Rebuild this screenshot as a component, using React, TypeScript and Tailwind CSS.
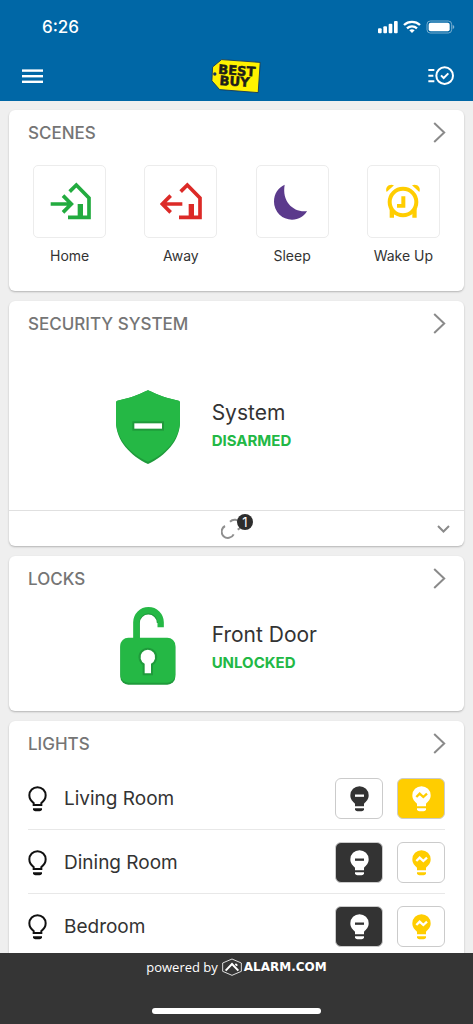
import { useState, type ReactNode } from "react";

interface CardProps {
  title: string;
  children: ReactNode;
}

interface StatusProps {
  name: string;
  state: string;
  icon: ReactNode;
}

interface Light {
  name: string;
  on: boolean;
}

const initialLights: Light[] = [
  { name: "Living Room", on: true },
  { name: "Dining Room", on: false },
  { name: "Bedroom", on: false },
];

const scenes = [
  { name: "Home", icon: <HomeIcon /> },
  { name: "Away", icon: <AwayIcon /> },
  { name: "Sleep", icon: <MoonIcon /> },
  { name: "Wake Up", icon: <AlarmIcon /> },
];

export default function App() {
  const [lights, setLights] = useState(initialLights);

  const setLight = (name: string, on: boolean) =>
    setLights((prev) => prev.map((l) => (l.name === name ? { ...l, on } : l)));

  return (
    <div className="flex h-dvh flex-col overflow-hidden bg-[#efefef] font-['Inter',sans-serif] text-[#333]">
      <Header />

      <main className="flex min-h-0 flex-1 flex-col gap-[10px] overflow-hidden px-[9px] pt-[9px]">
        <Card title="SCENES">
          <div className="grid grid-cols-4 px-[5px] pt-[10px] pb-[25px]">
            {scenes.map((scene) => (
              <button key={scene.name} type="button" className="flex flex-col items-center gap-2">
                <span className="flex size-[73px] items-center justify-center rounded-[5px] border border-[#ececec]">
                  {scene.icon}
                </span>
                <span className="text-sm leading-5">{scene.name}</span>
              </button>
            ))}
          </div>
        </Card>

        <Card title="SECURITY SYSTEM">
          <div className="flex h-[164px] items-start pt-11">
            <Status name="System" state="DISARMED" icon={<ShieldIcon />} />
          </div>
          <button
            type="button"
            aria-label="Show sensors"
            className="grid h-9 w-full grid-cols-[1fr_auto_1fr] items-center border-t border-[#e0e0e0] pr-[14px] pl-[5px]"
          >
            <span />
            <span className="relative size-[22px]">
              <SensorIcon />
              <span className="absolute -top-1 left-4 flex size-4 items-center justify-center rounded-full bg-[#2d2d2d] text-[13px] leading-4 text-white">
                1
              </span>
            </span>
            <svg className="justify-self-end" width="13" height="8" viewBox="0 0 13 8" fill="none">
              <path d="M1 1l5.5 5.5L12 1" stroke="#8a8a8a" strokeWidth="2" />
            </svg>
          </button>
        </Card>

        <Card title="LOCKS">
          <div className="flex h-[110px] items-start pt-[5px]">
            <Status name="Front Door" state="UNLOCKED" icon={<LockIcon />} />
          </div>
        </Card>

        <Card title="LIGHTS">
          <ul className="px-[19px]">
            {lights.map((light) => (
              <li key={light.name} className="flex h-16 items-center border-b border-[#e8e8e8] pt-[2px]">
                <BulbOutline />
                <span className="ml-[17px] flex-1 text-[19px] leading-6">{light.name}</span>
                <div className="flex gap-[14px]">
                  <button
                    type="button"
                    aria-label={`Turn ${light.name} off`}
                    aria-pressed={!light.on}
                    onClick={() => setLight(light.name, false)}
                    className={`flex h-[41px] w-12 items-center justify-center rounded-md border border-[#cbcbcb] ${
                      light.on ? "bg-white text-[#333]" : "bg-[#333] text-white"
                    }`}
                  >
                    <BulbSolid mark="M105 226h27" markColor={light.on ? "#fff" : "#333"} />
                  </button>
                  <button
                    type="button"
                    aria-label={`Turn ${light.name} on`}
                    aria-pressed={light.on}
                    onClick={() => setLight(light.name, true)}
                    className={`flex h-[41px] w-12 items-center justify-center rounded-md border border-[#cbcbcb] ${
                      light.on ? "bg-[#ffcd00] text-white" : "bg-white text-[#ffcd00]"
                    }`}
                  >
                    <BulbSolid mark="M103 230l10-10 11 10 11-10" markColor={light.on ? "#ffcd00" : "#fff"} />
                  </button>
                </div>
              </li>
            ))}
          </ul>
        </Card>
      </main>

      <Footer />
    </div>
  );
}

function Header() {
  return (
    <header className="shrink-0 bg-[#0067a6] text-white">
      <div className="flex h-[51px] items-center justify-between pt-[2px] pr-[18px] pl-[42px]">
        <span className="text-[17px] leading-6 font-medium">6:26</span>
        <svg width="77" height="14" viewBox="534 59 231 42" fill="currentColor" aria-label="Signal, wifi and battery">
          <rect x="534" y="84" width="11" height="15" rx="3" />
          <rect x="550" y="78" width="11" height="21" rx="3" />
          <rect x="566" y="70" width="11" height="29" rx="3" />
          <rect x="582" y="62" width="11" height="37" rx="3" />
          <g fill="none" stroke="currentColor" strokeWidth="7">
            <path d="M612 74a35 35 0 0 1 48 0" />
            <path d="M621 84a22 22 0 0 1 30 0" />
          </g>
          <path d="M628 90a12 12 0 0 1 16 0l-8 8z" />
          <rect x="681" y="62" width="74" height="36" rx="10" fill="none" stroke="currentColor" strokeWidth="3" opacity=".45" />
          <rect x="686" y="67" width="63" height="26" rx="6" />
          <path d="M758 74q5 2 5 6t-5 6z" opacity=".5" />
        </svg>
      </div>
      <div className="grid h-[50px] grid-cols-[1fr_auto_1fr] items-center pr-[19px] pl-[22px]">
        <button type="button" aria-label="Menu" className="justify-self-start">
          <svg width="21" height="15" viewBox="0 0 21 15" fill="currentColor">
            <rect y="0.4" width="21" height="2.4" />
            <rect y="6" width="21" height="2.4" />
            <rect y="11.6" width="21" height="2.4" />
          </svg>
        </button>
        <BrandLogo />
        <button type="button" aria-label="Activity" className="justify-self-end">
          <svg width="26" height="20" viewBox="683 198 78 60" fill="none" stroke="currentColor">
            <circle cx="733" cy="227" r="25" strokeWidth="6" />
            <path d="M684 210h18M684 227h15M684 244h18" strokeWidth="6" />
            <path d="M722 226l8 8 14-14" strokeWidth="6" />
          </svg>
        </button>
      </div>
    </header>
  );
}

function BrandLogo() {
  return (
    <svg width="54" height="36" viewBox="0 0 54 36" role="img" aria-label="Best Buy">
      <path
        d="M10.6 1.6L49.2 4.4 47.2 34.6 8.6 31.6.9 22.8 1.6 9z"
        fill="#fff200"
        stroke="#15375c"
        strokeWidth="0.9"
        strokeLinejoin="round"
      />
      <circle cx="3.8" cy="16" r="1.7" fill="#15375c" />
      <g
        transform="rotate(4 24 18)"
        className="font-['DejaVu_Sans',sans-serif] text-[13px] font-bold"
        fill="#1d1d1b"
        stroke="#1d1d1b"
        strokeWidth="0.5"
      >
        <text x="7" y="17">BEST</text>
        <text x="9" y="28">BUY</text>
      </g>
    </svg>
  );
}

function Card({ title, children }: CardProps) {
  return (
    <section className="shrink-0 rounded-md bg-white shadow-[0_1px_2px_rgba(0,0,0,0.25)]">
      <a href="#" className="flex h-[45px] items-center justify-between pr-[18px] pl-[19px]">
        <h2 className="text-[17px] leading-6 font-medium text-[#757575]">{title}</h2>
        <svg width="13" height="21" viewBox="0 0 13 21" fill="none">
          <path d="M1.2 1l10 9.5-10 9.5" stroke="#8a8a8a" strokeWidth="2" />
        </svg>
      </a>
      {children}
    </section>
  );
}

function Status({ name, state, icon }: StatusProps) {
  return (
    <div className="grid w-full grid-cols-[9fr_15fr] items-start">
      <div className="flex justify-end">
        <div className="flex w-16 justify-center">{icon}</div>
      </div>
      <div className="self-end pb-[9px] pl-8">
        <p className="text-[21px] leading-7">{name}</p>
        <p className="text-[15px] leading-7 font-bold text-[#22b845]">{state}</p>
      </div>
    </div>
  );
}

function Footer() {
  return (
    <footer className="flex h-[71px] shrink-0 flex-col items-center justify-between bg-[#353535] pt-1 pb-[10px] text-white">
      <div className="flex h-5 items-center">
        <span className="font-['Open_Sans',sans-serif] text-[13px] leading-5">powered by</span>
        <svg className="ml-1" width="20" height="18" viewBox="273 54 60 54" fill="none" stroke="currentColor">
          <path d="M303 57l28 12v25l-28 12-28-12V69z" strokeWidth="2.5" />
          <path d="M284 92l19-20 19 20" strokeWidth="6" />
          <path d="M313 72l6 5" strokeWidth="5" />
        </svg>
        <span className="ml-[2px] font-['DejaVu_Sans',sans-serif] text-[12px] leading-5 font-bold">ALARM.COM</span>
      </div>
      <div className="h-[6px] w-[169px] rounded-full bg-white" />
    </footer>
  );
}

function House() {
  return (
    <>
      <path d="M210 243l20-20 38 39v58h-63" />
      <path d="M242 280v40" strokeWidth="16" />
    </>
  );
}

function HomeIcon() {
  return (
    <svg width="42" height="40" viewBox="148 214 126 120" fill="none" stroke="#22ab3f" strokeWidth="11">
      <House />
      <path d="M153 280h60M190 255l25 25-25 25" />
    </svg>
  );
}

function AwayIcon() {
  return (
    <svg width="42" height="40" viewBox="148 214 126 120" fill="none" stroke="#dc2a27" strokeWidth="11">
      <House />
      <path d="M215 280h-60M180 255l-25 25 25 25" />
    </svg>
  );
}

function MoonIcon() {
  return (
    <svg width="42" height="40" viewBox="108 214 126 120">
      <path d="M149 222C130 230 117 249 117 273a54 54 0 0 0 54 54c20 0 37-10 45-26C176 306 140 274 149 222z" fill="#5b3a8c" />
    </svg>
  );
}

function AlarmIcon() {
  return (
    <svg width="42" height="40" viewBox="441 214 126 120" fill="#ffcd00">
      <circle cx="504" cy="274" r="40" fill="none" stroke="#ffcd00" strokeWidth="12" />
      <path d="M499 257h12v34h-25v-11h13zM464 293l13 10v18h-13zM545 293l-13 10v18h13z" />
      <path d="M455 244c-6-14 7-26 22-20zM553 244c6-14-7-26-22-20z" />
    </svg>
  );
}

function ShieldIcon() {
  return (
    <svg width="64" height="74" viewBox="78 58 192 222">
      <path
        d="M174 59c28 13 60 26 92 31q4 2 4 6v58c0 56-44 102-96 126-52-24-96-70-96-126V96q0-4 4-6c32-5 64-18 92-31z"
        fill="#1f9a3b"
      />
      <path
        d="M174 59c28 13 60 26 92 31q4 2 4 6v54c0 54-44 100-96 123-52-23-96-69-96-123V96q0-4 4-6c32-5 64-18 92-31z"
        fill="#25b845"
      />
      <rect x="127" y="152" width="95" height="28" fill="#1f9a3b" />
      <rect x="133" y="158" width="83" height="16" fill="#fff" />
    </svg>
  );
}

function LockIcon() {
  return (
    <svg width="56" height="80" viewBox="91 48 168 240">
      <path d="M143 145V99a33 33 0 0 1 66 0" fill="none" stroke="#1f9a3b" strokeWidth="15" />
      <path d="M140 147V97a36 36 0 0 1 73 0v15" fill="none" stroke="#25b845" strokeWidth="19" />
      <rect x="92" y="147" width="165" height="137" rx="24" fill="#1f9a3b" />
      <rect x="92" y="143" width="165" height="135" rx="24" fill="#25b845" />
      <path
        d="M165 250v-29a22 22 0 1 1 19 0v29z"
        fill="#fff"
        stroke="#1f9a3b"
        strokeWidth="12"
        paintOrder="stroke"
      />
    </svg>
  );
}

function SensorIcon() {
  return (
    <svg width="22" height="22" viewBox="95 84 66 66" fill="none" stroke="#8f8f8f" strokeWidth="6">
      <path d="M107 108a19 19 0 1 0 26 25" />
      <path d="M122 95a20 20 0 0 1 31 4M145 119l8-5" />
    </svg>
  );
}

function BulbOutline() {
  return (
    <svg width="19" height="26" viewBox="82 197 57 78" aria-hidden="true">
      <path
        d="M99 254v-6c-7-5-13-12-13-23a24.500 24.500 0 0 1 49 0c0 11-6 18-13 23v6z"
        fill="none"
        stroke="#111"
        strokeWidth="6"
      />
      <path d="M97 264h27v3q-1 6-7 6h-13q-6 0-7-6z" fill="#111" />
    </svg>
  );
}

function BulbSolid({ mark, markColor }: { mark: string; markColor: string }) {
  return (
    <svg width="19" height="26" viewBox="90 197 57 78" aria-hidden="true">
      <path d="M105 258v-8c-7-6-14-13-14-25a27.500 27.500 0 0 1 55 0c0 12-7 19-14 25v8z" fill="currentColor" />
      <path d="M105 264h27v3q-1 6-7 6h-13q-6 0-7-6z" fill="currentColor" />
      <path d={mark} fill="none" stroke={markColor} strokeWidth="7" />
    </svg>
  );
}
